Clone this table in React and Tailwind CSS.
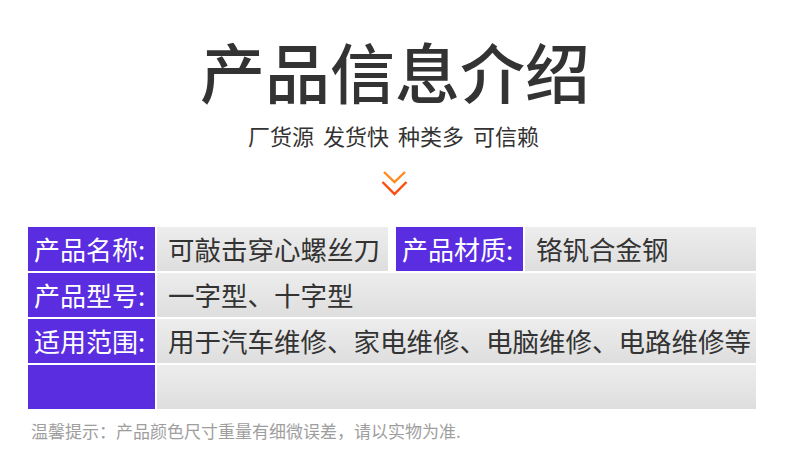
export default function App() {
  const cell = 'bg-gradient-to-b from-[#ededed] to-[#dedede] h-[44px] flex items-center'
  const label = 'bg-[#5b2de0] text-white w-[127px] h-[44px] flex items-center pl-[6px] text-[26px] leading-none shrink-0 whitespace-nowrap'
  return (
    <div className="w-[790px] h-[454px] bg-white overflow-hidden font-['Noto_Sans_CJK_SC',sans-serif] text-[#333]">
      <div className="flex flex-col items-center pt-[38px]">
        <h1 className="text-[65px] leading-none font-medium">产品信息介绍</h1>
        <p className="mt-[21px] text-[22px] leading-none flex gap-[9px] -ml-[3px]">
          <span>厂货源</span>
          <span>发货快</span>
          <span>种类多</span>
          <span>可信赖</span>
        </p>
        <svg className="mt-[24px]" width="28" height="27" viewBox="0 0 28 27" fill="none">
          <path d="M3 2 L13.5 12 L24 2" stroke="#ff8a1e" strokeWidth="2.4" />
          <path d="M1.5 12 L13.5 24 L25.5 12" stroke="#ff4a0e" strokeWidth="2.4" />
        </svg>
      </div>
      <div className="ml-[28px] mr-[34px] mt-[30px] flex flex-col gap-[2px]">
        <div className="flex gap-[2px]">
          <div className={label}>产品名称:</div>
          <div className={`${cell} w-[231px] pl-[11px] text-[26.5px]`}>可敲击穿心螺丝刀</div>
          <div className="w-[4px] bg-white" />
          <div className={label}>产品材质:</div>
          <div className={`${cell} flex-1 pl-[11px] text-[26.5px]`}>铬钒合金钢</div>
        </div>
        <div className="flex gap-[2px]">
          <div className={label}>产品型号:</div>
          <div className={`${cell} flex-1 pl-[11px] text-[26.5px]`}>一字型、十字型</div>
        </div>
        <div className="flex gap-[2px]">
          <div className={label}>适用范围:</div>
          <div className={`${cell} flex-1 pl-[11px] text-[26.5px] whitespace-nowrap`}>用于汽车维修、家电维修、电脑维修、电路维修等</div>
        </div>
        <div className="flex gap-[2px]">
          <div className={label}></div>
          <div className={`${cell} flex-1`}></div>
        </div>
      </div>
      <p className="ml-[31px] mt-[13px] text-[17px] leading-none text-[#9e9e9e]">温馨提示：产品颜色尺寸重量有细微误差，请以实物为准.</p>
    </div>
  )
}
